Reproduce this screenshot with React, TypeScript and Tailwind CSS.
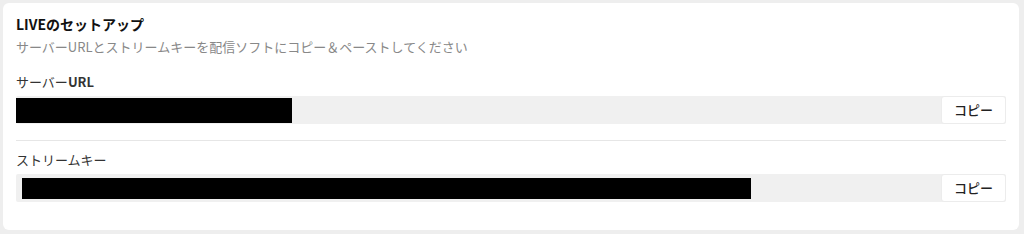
import React from "react";

const font = { fontFamily: '"Noto Sans CJK JP", "Noto Sans", sans-serif' };

function Field({ label, boxClass }: { label: React.ReactNode; boxClass: string }) {
  return (
    <div>
      <div className="text-[13px] leading-[18px] text-[#333]">{label}</div>
      <div className="mt-[5px] flex h-[28px] items-stretch bg-[#f0f0f0] rounded-[2px]">
        <div className="flex-1 flex items-center">
          <div className={boxClass} />
        </div>
        <button className="w-[65px] bg-white text-[13px] font-medium text-[#222] rounded-[3px] border border-[#ececec]">
          コピー
        </button>
      </div>
    </div>
  );
}

export default function App() {
  return (
    <div className="w-[1024px] h-[234px] bg-[#eeeeee] pt-[3px] pl-[3px]" style={font}>
      <div className="w-[1016px] h-[227px] bg-white rounded-[6px] px-[13px] pt-[11px]">
        <div className="text-[14px] font-bold leading-[20px] text-[#111]">LIVEのセットアップ</div>
        <div className="mt-[4px] text-[13px] leading-[18px] text-[#888]">
          サーバーURLとストリームキーを配信ソフトにコピー＆ペーストしてください
        </div>
        <div className="mt-[17px]">
          <Field
            label={
              <>
                サーバー<span className="font-semibold">URL</span>
              </>
            }
            boxClass="mt-[1px] h-[25px] w-[276px] bg-black"
          />
        </div>
        <div className="mt-[16px] border-t border-[#e6e6e6] pt-[10px]">
          <Field label="ストリームキー" boxClass="ml-[6px] h-[21px] w-[729px] bg-black" />
        </div>
      </div>
    </div>
  );
}
